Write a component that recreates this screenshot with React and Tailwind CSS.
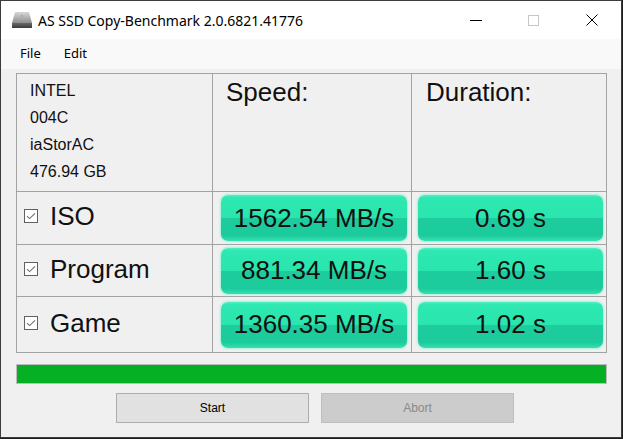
import React from "react";

const sans = { fontFamily: '"Liberation Sans", Arial, sans-serif' };
const ui = { fontFamily: '"Noto Sans", "Open Sans", sans-serif' };

function Check() {
  return (
    <svg width="14" height="14" viewBox="0 0 14 14" className="shrink-0">
      <rect x="0.5" y="0.5" width="13" height="13" fill="#fff" stroke="#606060" />
      <path d="M3 7.2 L5.6 9.6 L11 4.4" fill="none" stroke="#707070" strokeWidth="1.1" />
    </svg>
  );
}

function Green({ children }) {
  return (
    <div className="h-[46px] w-full rounded-[7px] flex items-center justify-center text-[26px] text-[#111] bg-[linear-gradient(to_bottom,#4ff0c4_0%,#2ee8b2_6%,#2be5af_50%,#1dcd9d_50%,#1ccb9b_88%,#36e0b2_100%)] shadow-[0_0_2px_1px_#a8f0da]" style={sans}>
      {children}
    </div>
  );
}

function Row({ label, speed, dur }) {
  return (
    <>
      <div className="bg-[#f0f0f0] flex items-center pl-[7px] pb-[4px]">
        <Check />
        <span className="ml-[12px] text-[26px] text-[#111] leading-none" style={sans}>{label}</span>
      </div>
      <div className="bg-[#f0f0f0] flex items-center pl-[8px] pr-[4px]">
        <Green>{speed}</Green>
      </div>
      <div className="bg-[#f0f0f0] flex items-center pl-[6px] pr-[3px]">
        <Green>{dur}</Green>
      </div>
    </>
  );
}

export default function App() {
  return (
    <div className="w-[623px] h-[439px] bg-[#1e1e1e] overflow-hidden">
      <div className="w-[622px] h-[438px] border border-[#3c3c3c] bg-[#f0f0f0] flex flex-col">
        {/* title bar */}
        <div className="h-[38px] bg-white flex items-center relative shrink-0">
          <svg width="22" height="18" viewBox="0 0 22 18" className="ml-[10px]">
            <defs>
              <linearGradient id="dtop" x1="0" y1="0" x2="0" y2="1">
                <stop offset="0" stopColor="#d8d8d8" />
                <stop offset="1" stopColor="#8e8e8e" />
              </linearGradient>
              <linearGradient id="dbot" x1="0" y1="0" x2="0" y2="1">
                <stop offset="0" stopColor="#6a6a6a" />
                <stop offset="1" stopColor="#3a3a3a" />
              </linearGradient>
            </defs>
            <path d="M4 1 H18 L21 12 H1 Z" fill="url(#dtop)" />
            <rect x="1" y="12" width="20" height="5" fill="url(#dbot)" />
            <circle cx="11" cy="5" r="1.2" fill="#aaa" />
          </svg>
          <span className="ml-[5px] text-[14px] text-black" style={ui}>AS SSD Copy-Benchmark 2.0.6821.41776</span>
          <div className="ml-auto flex items-center h-full mr-[6px]">
            <div className="w-[46px] h-full flex items-center justify-center">
              <div className="w-[12px] h-px bg-black" />
            </div>
            <div className="w-[11px]" />
            <div className="w-[46px] h-full flex items-center justify-center">
              <div className="w-[11px] h-[11px] border border-[#c6c6c6]" />
            </div>
            <div className="w-[13px]" />
            <div className="w-[46px] h-full flex items-center justify-center">
              <svg width="12" height="12" viewBox="0 0 12 12">
                <path d="M0.5 0.5 L11.5 11.5 M11.5 0.5 L0.5 11.5" stroke="#000" strokeWidth="1" />
              </svg>
            </div>
          </div>
        </div>
        {/* menu */}
        <div className="h-[30px] bg-[#f9f9f9] flex items-center text-[13px] text-black shrink-0" style={ui}>
          <span className="ml-[19px]">File</span>
          <span className="ml-[23px]">Edit</span>
        </div>
        {/* main */}
        <div className="ml-[15px] mt-[4px] flex flex-col">
          <div className="grid grid-cols-[195px_198px_194px] grid-rows-[117px_52px_51px_55px] w-[591px] bg-[#a3a3a3] p-px gap-px">
            <div className="bg-[#f0f0f0] pl-[13px] pt-[3px] text-[16px] text-[#111] leading-[27px]" style={sans}>
              <div>INTEL</div>
              <div>004C</div>
              <div>iaStorAC</div>
              <div>476.94 GB</div>
            </div>
            <div className="bg-[#f0f0f0] pl-[13px] pt-[2px] text-[26px] text-[#111] leading-[32px]" style={sans}>Speed:</div>
            <div className="bg-[#f0f0f0] pl-[14px] pt-[2px] text-[26px] text-[#111] leading-[32px]" style={sans}>Duration:</div>
            <Row label="ISO" speed="1562.54 MB/s" dur="0.69 s" />
            <Row label="Program" speed="881.34 MB/s" dur="1.60 s" />
            <Row label="Game" speed="1360.35 MB/s" dur="1.02 s" />
          </div>
          <div className="mt-[11px] w-[591px] h-[20px] border border-[#bcbcbc] bg-[#e6e6e6]">
            <div className="h-full w-full bg-[#06b025]" />
          </div>
          <div className="mt-[9px] flex gap-[12px] ml-[100px]">
            <div className="w-[193px] h-[30px] border border-[#adadad] bg-[#e1e1e1] flex items-center justify-center text-[12px] text-black" style={sans}>Start</div>
            <div className="w-[193px] h-[30px] border border-[#bfbfbf] bg-[#cccccc] flex items-center justify-center text-[12px] text-[#8a8a8a]" style={sans}>Abort</div>
          </div>
        </div>
      </div>
    </div>
  );
}
